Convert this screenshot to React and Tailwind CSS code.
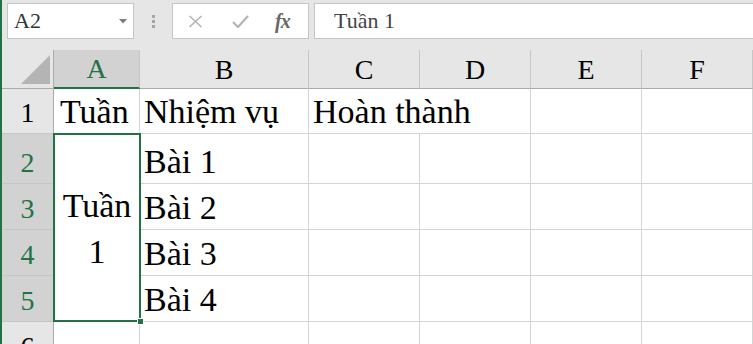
import React from 'react';

const SERIF = "font-['Liberation_Serif','Times_New_Roman',serif]";

const COLS = ['A', 'B', 'C', 'D', 'E', 'F'];
const TASKS = ['Bài 1', 'Bài 2', 'Bài 3', 'Bài 4'];

function ColHeader({ label, selected }) {
  return (
    <div
      className={`flex items-end justify-center pb-[4px] border-r border-r-[#c6c6c6] leading-none text-[28px] ${
        selected
          ? 'bg-[#d2d2d2] text-[#217346] border-b-2 border-b-[#217346]'
          : 'bg-[#e6e6e6] text-black border-b border-b-[#ababab]'
      }`}
    >
      {label}
    </div>
  );
}

function RowHeader({ n, selected }) {
  return (
    <div
      className={`flex items-end justify-center pb-[6px] border-r border-r-[#ababab] border-b border-b-[#c6c6c6] leading-none text-[28px] ${
        selected ? 'bg-[#d2d2d2] text-[#217346]' : 'bg-[#e6e6e6] text-black'
      }`}
    >
      {n}
    </div>
  );
}

function Cell({ children, className = '' }) {
  return (
    <div
      className={`flex items-end pl-[4px] pb-[4px] border-r border-b border-[#d4d4d4] bg-white leading-none text-[34px] text-black whitespace-nowrap overflow-visible ${className}`}
    >
      {children}
    </div>
  );
}

function FormulaBar() {
  return (
    <div className="flex items-start h-[50px] pt-[3px] bg-[#e6e6e6]">
      {/* Name box */}
      <div className="ml-[5px] w-[127px] h-[36px] flex items-center justify-between bg-white border border-[#c6c6c6] pl-[6px] pr-[6px]">
        <span className={`${SERIF} text-[22px] leading-none text-[#333]`}>A2</span>
        <svg width="8" height="5" viewBox="0 0 8 5">
          <path d="M0 0h8L4 4.5z" fill="#7a7a7a" />
        </svg>
      </div>

      {/* drag dots */}
      <div className="w-[38px] h-[36px] flex flex-col items-center justify-center gap-[2px]">
        <span className="w-[3px] h-[3px] bg-[#a6a6a6]" />
        <span className="w-[3px] h-[3px] bg-[#a6a6a6]" />
        <span className="w-[3px] h-[3px] bg-[#a6a6a6]" />
      </div>

      {/* cancel / enter / fx */}
      <div className="w-[137px] h-[36px] flex items-center bg-white border border-[#c6c6c6]">
        <svg className="ml-[15px]" width="15" height="13" viewBox="0 0 15 13">
          <path d="M1.5 1L13.5 12M13.5 1L1.5 12" stroke="#b4b4b4" strokeWidth="1.6" fill="none" />
        </svg>
        <svg className="ml-[29px]" width="17" height="13" viewBox="0 0 17 13">
          <path d="M1 7l5 5L16 1" stroke="#b4b4b4" strokeWidth="2.2" fill="none" />
        </svg>
        <span className={`${SERIF} ml-[26px] text-[20px] leading-none italic font-bold text-[#666] tracking-[-1px]`}>
          fx
        </span>
      </div>

      {/* formula input */}
      <div className="ml-[5px] flex-1 h-[36px] flex items-center bg-white border border-r-0 border-[#c6c6c6] pl-[19px]">
        <span className={`${SERIF} text-[22px] leading-none text-[#444]`}>Tuần 1</span>
      </div>
    </div>
  );
}

export default function App() {
  return (
    <div className={`w-[753px] h-[344px] overflow-hidden border-l-2 border-l-[#217346] bg-white ${SERIF}`}>
      <FormulaBar />

      <div className="relative">
        <div className="grid grid-cols-[52px_86px_169px_111px_111px_111px_111px] grid-rows-[39px_45px_50px_46px_46px_46px_46px]">
          {/* header row */}
          <div className="relative bg-[#e6e6e6] border-r border-r-[#ababab] border-b border-b-[#ababab]">
            <svg className="absolute right-[3px] bottom-[4px]" width="29" height="29" viewBox="0 0 29 29">
              <path d="M29 0V29H0z" fill="#b4b4b4" />
            </svg>
          </div>
          {COLS.map((c) => (
            <ColHeader key={c} label={c} selected={c === 'A'} />
          ))}

          {/* row 1 */}
          <RowHeader n={1} />
          <Cell className="pl-[6px]">Tuần</Cell>
          <Cell>Nhiệm vụ</Cell>
          <Cell className="col-span-2">Hoàn thành</Cell>
          <Cell />
          <Cell />

          {/* row 2 with merged A2:A5 */}
          <RowHeader n={2} selected />
          <div className="row-span-4 flex flex-col items-center justify-center bg-white leading-[46px] text-[34px] text-black pt-[2px]">
            <span>Tuần</span>
            <span>1</span>
          </div>
          <Cell>{TASKS[0]}</Cell>
          <Cell />
          <Cell />
          <Cell />
          <Cell />

          {[3, 4, 5].map((n) => (
            <React.Fragment key={n}>
              <RowHeader n={n} selected />
              <Cell>{TASKS[n - 2]}</Cell>
              <Cell />
              <Cell />
              <Cell />
              <Cell />
            </React.Fragment>
          ))}

          {/* row 6 */}
          <RowHeader n={6} />
          <Cell />
          <Cell />
          <Cell />
          <Cell />
          <Cell />
          <Cell />
        </div>

        {/* selection A2:A5 */}
        <div className="absolute left-[51px] top-[83px] w-[88px] h-[189px] border-2 border-[#217346] pointer-events-none">
          <span className="absolute -right-[5px] -bottom-[5px] w-[7px] h-[7px] bg-[#217346] border border-white" />
        </div>
      </div>
    </div>
  );
}
